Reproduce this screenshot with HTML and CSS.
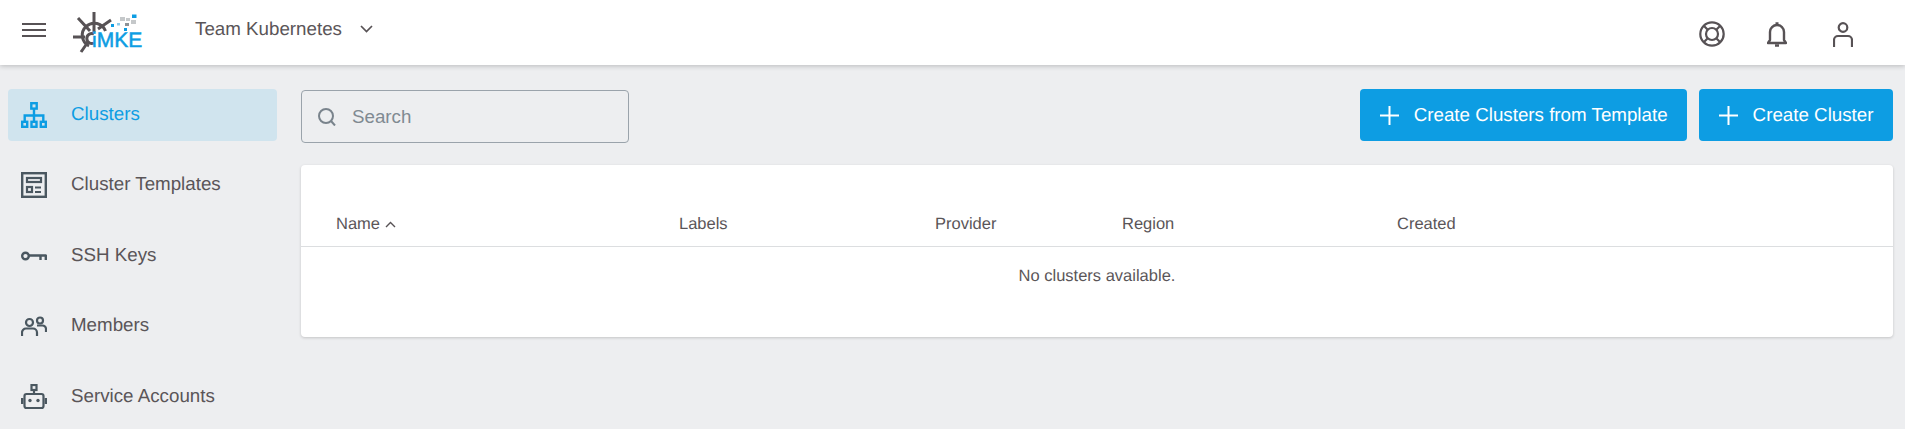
FILE: index.html
```html
<!DOCTYPE html>
<html lang="en">
<head>
  <meta charset="UTF-8">
  <title>Clusters</title>
  <link rel="stylesheet" href="styles.css">
</head>
<body>

<header class="topbar">
  <button class="menu-btn" aria-label="Menu">
    <svg width="24" height="14" viewBox="0 0 24 14"><path d="M0 1h24M0 7h24M0 13h24" stroke="#575255" stroke-width="2"/></svg>
  </button>
  <div class="logo">
    <svg width="72" height="44" viewBox="0 0 72 44">
      <g fill="none" stroke="#575255" stroke-width="3">
        <path d="M17 36A12 12 0 1 1 33.500 21"/>
        <path d="M22 24a5 5 0 1 0 0 9"/>
        <path d="M22 2v20M6 8l12 13M39 10L26 19M1 27h12M9 42l7-10"/>
      </g>
      <rect x="60" y="4.500" width="4.500" height="3.500" fill="#0d9de3"/>
      <rect x="48" y="7" width="5" height="4" fill="#c5c8ca"/>
      <rect x="54" y="8" width="4" height="3" fill="#c5c8ca"/>
      <rect x="59" y="10" width="5" height="4" fill="#c5c8ca"/>
      <rect x="53" y="13" width="4" height="3" fill="#8d9296"/>
      <rect x="39" y="14" width="3" height="3" fill="#0d9de3"/>
      <rect x="45" y="13" width="3" height="2.500" fill="#8fcbea"/>
      <rect x="52" y="18" width="3" height="3" fill="#0d9de3"/>
    </svg>
    <span class="logo-text">iMKE</span>
  </div>
  <div class="project">
    <span>Team Kubernetes</span>
    <svg width="13" height="8" viewBox="0 0 13 8"><path d="M1 1l5.500 5.500L12 1" fill="none" stroke="#575255" stroke-width="1.700"/></svg>
  </div>
  <nav class="top-icons">
    <svg width="26" height="26" viewBox="0 0 26 26" fill="none" stroke="#575255" stroke-width="2.200">
      <circle cx="13" cy="13" r="11.700"/><circle cx="13" cy="13" r="6"/>
      <path d="M5 5l4 4M21 5l-4 4M5 21l4-4M21 21l-4-4"/>
    </svg>
    <svg class="bell" width="20" height="25" viewBox="0 0 20 25" fill="none" stroke="#575255" stroke-width="2.400">
      <path d="M1 21h18l-2-3V10a7 7 0 0 0-14 0v8z" stroke-linejoin="round"/>
      <path d="M8.500 1.500h3M8 23.500h4"/>
    </svg>
    <svg width="20" height="25" viewBox="0 0 20 25" fill="none" stroke="#575255" stroke-width="2.200">
      <circle cx="10" cy="5.500" r="4.300"/>
      <path d="M1 25v-7a4 4 0 0 1 4-4h10a4 4 0 0 1 4 4v7"/>
    </svg>
  </nav>
</header>

<div class="layout">
  <aside class="sidebar">
    <a class="nav-item active">
      <svg width="26" height="26" viewBox="0 0 26 26" fill="none" stroke="#0d9de3" stroke-width="2.400">
        <rect x="10.300" y="1.200" width="5.400" height="5.400"/><rect x="1.200" y="19.800" width="5" height="5"/><rect x="10.500" y="19.800" width="5" height="5"/><rect x="19.800" y="19.800" width="5" height="5"/>
        <path d="M13 6v14M3.700 20v-6.500h18.600V20"/>
      </svg>
      <span>Clusters</span>
    </a>
    <a class="nav-item">
      <svg width="26" height="26" viewBox="0 0 26 26" fill="none" stroke="#4a5760" stroke-width="2.200">
        <rect x="1.200" y="1.200" width="23.600" height="23.600" stroke-width="2.400"/>
        <rect x="6" y="6" width="14" height="4"/><rect x="6" y="15" width="5" height="5"/>
        <path d="M14 15.500h6M14 20h6"/>
      </svg>
      <span>Cluster Templates</span>
    </a>
    <a class="nav-item">
      <svg width="26" height="26" viewBox="0 0 26 26" fill="none" stroke="#4a5760" stroke-width="2.400">
        <circle cx="4.500" cy="13" r="3.300"/>
        <path d="M8 12.500h17.500M19.500 12v5M24.800 12v5"/>
      </svg>
      <span>SSH Keys</span>
    </a>
    <a class="nav-item">
      <svg width="26" height="26" viewBox="0 0 26 26" fill="none" stroke="#4a5760" stroke-width="2.200">
        <circle cx="8.500" cy="9.500" r="3.500"/><circle cx="19" cy="7.500" r="3"/>
        <path d="M1 23v-3.500a4 4 0 0 1 4-4h7a4 4 0 0 1 4 4V23M16 12.500h5.500a3.500 3.500 0 0 1 3.500 3.500v3"/>
      </svg>
      <span>Members</span>
    </a>
    <a class="nav-item">
      <svg width="26" height="26" viewBox="0 0 26 26" fill="none" stroke="#4a5760" stroke-width="2.200">
        <rect x="10.500" y="1" width="5" height="5"/>
        <path d="M13 6v4"/>
        <rect x="3.500" y="10" width="19" height="14" rx="2"/>
        <path d="M1.200 14v6M24.800 14v6" stroke-width="2.400"/>
        <circle cx="9" cy="16.500" r="1.700" fill="#4a5760" stroke="none"/>
        <circle cx="17" cy="16.500" r="1.700" fill="#4a5760" stroke="none"/>
      </svg>
      <span>Service Accounts</span>
    </a>
  </aside>

  <main class="content">
    <div class="toolbar">
      <label class="search">
        <svg width="18" height="18" viewBox="0 0 18 18" fill="none" stroke="#79838c" stroke-width="2">
          <circle cx="8" cy="8" r="7"/><path d="M13 13l4 4.500"/>
        </svg>
        <input type="text" placeholder="Search">
      </label>
      <div class="actions">
        <button class="btn">
          <svg width="19" height="19" viewBox="0 0 19 19"><path d="M9.500 0v19M0 9.500h19" stroke="#fff" stroke-width="2"/></svg>
          Create Clusters from Template
        </button>
        <button class="btn">
          <svg width="19" height="19" viewBox="0 0 19 19"><path d="M9.500 0v19M0 9.500h19" stroke="#fff" stroke-width="2"/></svg>
          Create Cluster
        </button>
      </div>
    </div>

    <section class="card">
      <div class="table-head">
        <div class="sort-col">Name
          <svg width="11" height="7" viewBox="0 0 11 7"><path d="M1 6l4.500-4.500L10 6" fill="none" stroke="#575255" stroke-width="1.400"/></svg>
        </div>
        <div>Labels</div>
        <div>Provider</div>
        <div>Region</div>
        <div>Created</div>
      </div>
      <div class="empty">No clusters available.</div>
    </section>
  </main>
</div>

</body>
</html>
```

FILE: styles.css
```css
* {
  box-sizing: border-box;
}

html, body {
  height: 100%;
}

body {
  margin: 0;
  font-family: "Liberation Sans", Arial, sans-serif;
  background-color: #edeef0;
  color: #5a5558;
  overflow: hidden;
  text-rendering: geometricPrecision;
}

.topbar {
  display: flex;
  align-items: flex-start;
  height: 65px;
  background-color: #fff;
  box-shadow: 0 1px 5px rgba(0,0,0,0.22);
  position: relative;
}

.menu-btn {
  display: flex;
  margin: 23px 0 0 22px;
  padding: 0;
  border: none;
  background: none;
}

.logo {
  position: relative;
  width: 72px;
  height: 44px;
  margin: 10px 0 0 26px;
}

.logo-text {
  position: absolute;
  left: 20px;
  top: 20px;
  font-size: 21px;
  line-height: 21px;
  color: #0d9de3;
  -webkit-text-stroke: 0.5px #0d9de3;
}

.project {
  display: flex;
  align-items: center;
  gap: 18px;
  margin: 18px 0 0 51px;
  font-size: 18.750px;
  line-height: 21px;
}

.top-icons {
  display: flex;
  align-items: center;
  margin: 21px 0 0 auto;
  padding-right: 52px;
}

.top-icons svg {
  margin-left: 46px;
}

.top-icons .bell {
  margin-left: 42px;
}

.layout {
  display: flex;
  padding-top: 24px;
}

.sidebar {
  flex: none;
  width: 277px;
  padding-left: 8px;
  display: flex;
  flex-direction: column;
  gap: 18.400px;
}

.nav-item {
  display: flex;
  align-items: center;
  gap: 24px;
  height: 52px;
  padding-left: 13px;
  border-radius: 4px;
  font-size: 18.750px;
}

.nav-item span {
  margin-bottom: 2px;
}

.nav-item.active {
  background-color: #d0e4ee;
  color: #0d9de3;
}

.content {
  flex: 1;
  padding: 0 12px 0 24px;
}

.toolbar {
  display: flex;
  justify-content: space-between;
  align-items: flex-start;
  margin-bottom: 22px;
}

.search {
  display: flex;
  align-items: center;
  gap: 16px;
  width: 328px;
  height: 53px;
  margin-top: 1px;
  padding-left: 16px;
  border: 1px solid #9aa3ab;
  border-radius: 4px;
}

.search input {
  flex: 1;
  min-width: 0;
  border: none;
  background: none;
  outline: none;
  padding: 0;
  font: 18.750px "Liberation Sans", Arial, sans-serif;
  color: #575255;
}

.search input::placeholder {
  color: #808a92;
  opacity: 1;
}

.actions {
  display: flex;
  gap: 12px;
}

.btn {
  display: flex;
  align-items: center;
  gap: 15px;
  height: 52px;
  padding: 0 19.500px;
  border: none;
  border-radius: 4px;
  background-color: #0d9de3;
  color: #fff;
  font: 18.750px "Liberation Sans", Arial, sans-serif;
  text-rendering: geometricPrecision;
}

.card {
  height: 172px;
  background-color: #fff;
  border-radius: 4px;
  box-shadow: 0 1px 3px rgba(0,0,0,0.18);
  font-size: 16.500px;
}

.table-head {
  display: grid;
  grid-template-columns: 343px 256px 187px 275px 1fr;
  align-items: center;
  height: 82px;
  padding: 38px 0 0 35px;
  border-bottom: 1px solid #dcdee0;
}

.sort-col {
  display: flex;
  align-items: center;
  gap: 5px;
}

.empty {
  padding: 20px 0 0;
  text-align: center;
}
```
